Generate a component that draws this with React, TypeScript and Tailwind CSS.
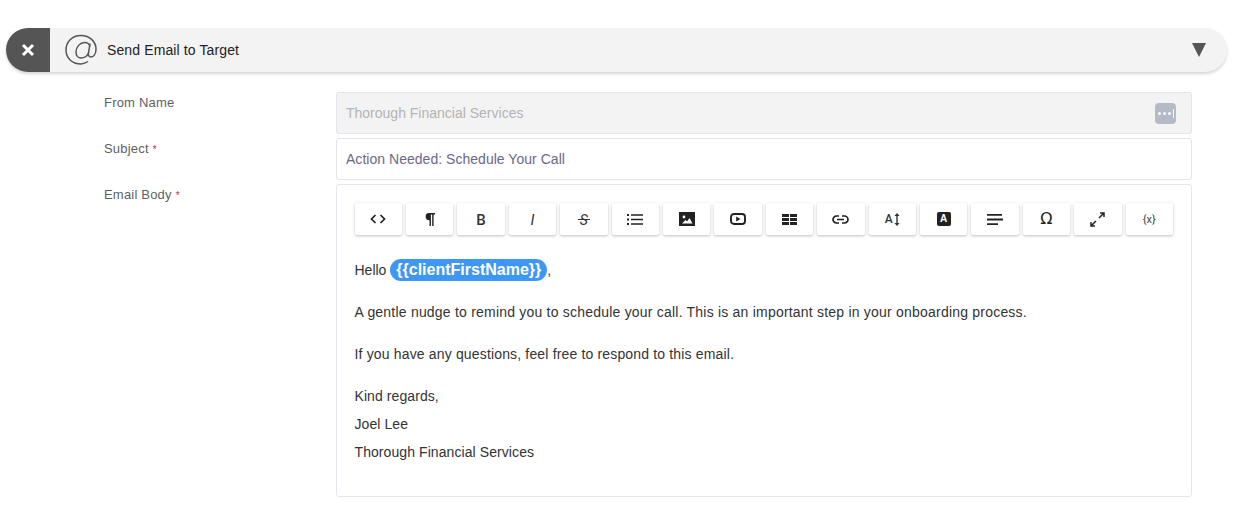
import React from "react";

const stroke = "currentColor";
const tb: React.ReactNode[] = [
  <svg key="a" width="16" height="10" viewBox="0 0 16 10" fill="none" stroke={stroke} strokeWidth="1.7"><path d="M5.5 1 1.5 5l4 4M10.5 1l4 4-4 4" /></svg>,
  <svg key="b" width="10" height="13" viewBox="0 0 10 13" fill={stroke}><path d="M4 0h6v1.6H8.6V13H7.2V1.6H5.9V13H4.5V7.2A3.6 3.6 0 0 1 4 0Z" /></svg>,
  <span key="c" className="mt-[2px] text-[15px] font-medium leading-none text-[#333] [font-family:Roboto,sans-serif]">B</span>,
  <span key="d" className="mt-[2px] text-[15px] italic leading-none text-[#333] [font-family:Roboto,sans-serif]">I</span>,
  <span key="e" className="relative mt-[2px] text-[14px] italic leading-none text-[#333] [font-family:Roboto,sans-serif] after:absolute after:left-[-2px] after:right-[-2px] after:top-[6px] after:h-px after:bg-[#333]">S</span>,
  <svg key="f" width="16" height="11" viewBox="0 0 16 11" fill={stroke}><path d="M0 0h2v2H0zM0 4.500h2v2H0zM0 9h2v2H0zM4 .2h12v1.600H4zM4 4.700h12v1.600H4zM4 9.200h12v1.600H4z" /></svg>,
  <svg key="g" width="16" height="14" viewBox="0 0 16 14"><path d="M0 0h16v14H0z" fill="#222" /><circle cx="5" cy="5" r="1.4" fill="#fff" /><path d="M3 11.500 6.500 8l1.500 1.500L10.500 6l3 5.500z" fill="#fff" /></svg>,
  <svg key="h" width="16" height="12" viewBox="0 0 16 12"><rect x="1" y="1" width="14" height="10" rx="3" fill="none" stroke="#222" strokeWidth="1.9" /><path d="M6.200 3.400v5.200L10.500 6z" fill="#222" /></svg>,
  <svg key="i" width="15" height="11" viewBox="0 0 15 11" fill="#222"><path d="M0 0h7v3H0zM8 0h7v3H8zM0 4h7v3H0zM8 4h7v3H8zM0 8h7v3H0zM8 8h7v3H8z" /></svg>,
  <svg key="j" width="17" height="9" viewBox="0 0 17 9" fill="none" stroke="#222" strokeWidth="1.7"><path d="M7 1H4.500a3.500 3.500 0 0 0 0 7H7M10 1h2.500a3.500 3.500 0 0 1 0 7H10M5 4.500h7" /></svg>,
  <span key="k" className="flex items-center gap-[1px]"><span className="text-[12px] font-medium leading-none text-[#333] [font-family:Roboto,sans-serif]">A</span><svg width="6" height="13" viewBox="0 0 6 13" fill="#333"><path d="M3 0l2.600 3H3.700v7h1.900L3 13 .4 10h1.900V3H.4z" /></svg></span>,
  <span key="l" className="flex h-[14px] w-[14px] items-center justify-center rounded-[2px] bg-[#222] text-[10px] font-bold leading-none text-white [font-family:'Liberation_Sans',sans-serif]">A</span>,
  <svg key="m" width="16" height="11" viewBox="0 0 16 11" fill="#222"><path d="M0 0h15v1.800H0zM0 4.600h16v1.800H0zM0 9.200h11v1.800H0z" /></svg>,
  <span key="n" className="text-[16px] leading-none text-[#222] [font-family:'DejaVu_Sans',sans-serif]">Ω</span>,
  <svg key="o" width="15" height="15" viewBox="0 0 15 15" fill="none" stroke="#222" strokeWidth="1.5"><path d="M9 6l5-5M10 1h4v4M6 9l-5 5M1 10v4h4" /></svg>,
  <span key="p" className="text-[11px] leading-none text-[#444] [font-family:Roboto,sans-serif]">{"{x}"}</span>,
];

function Label({ children, req }: { children: React.ReactNode; req?: boolean }) {
  return (
    <div className="w-[336px] shrink-0 pl-[104px] pt-[3px] text-[13px] leading-[16px] tracking-[0.2px] text-[#5f5f5f]">
      {children}
      {req && <span className="ml-[4px] text-[10px] text-[#b33]">*</span>}
    </div>
  );
}

export default function App() {
  return (
    <div className="h-[530px] w-[1234px] overflow-hidden bg-white pt-[28px] text-[14px] text-[#333] [font-family:'Liberation_Sans',sans-serif]">
      <div className="ml-[6px] flex h-[44px] w-[1221px] items-center rounded-[22px] bg-[#f3f3f3] shadow-[0_2px_3px_rgba(0,0,0,0.16)]">
        <div className="flex h-full w-[44px] items-center justify-center rounded-l-[22px] bg-[#555]">
          <svg width="14" height="14" viewBox="0 0 14 14" stroke="#fff" strokeWidth="3"><path d="M2 2l10 10M12 2L2 12" /></svg>
        </div>
        <svg className="ml-[15px]" width="32" height="32" viewBox="0 0 32 32" fill="none" stroke="#555" strokeWidth="1.5">
          <path d="M23 27.500A15 15 0 0 1 16 30C7 30 1 24 1 16S7 1.500 16 1.500 31 8 31 15c0 4.500-2 8-5 8-2 0-3-1.500-2.500-4L25 9.500" />
          <path d="M23.500 19C22 22.500 19 24 16 24c-3 0-5-2.500-5-6 0-5 4-9.500 8.500-9.500 3 0 5 2 5.500 4" />
        </svg>
        <span className="ml-[10px] text-[14px] tracking-[0.12px] text-[#222]">Send Email to Target</span>
        <svg className="ml-auto mr-[21px]" width="14" height="14" viewBox="0 0 14 14" fill="#555"><path d="M0 0h14L7 14z" /></svg>
      </div>

      <div className="mt-[20px] flex flex-col gap-[4px]">
        <div className="flex">
          <Label>From Name</Label>
          <div className="flex h-[42px] w-[856px] items-center justify-between rounded-[3px] border border-[#e4e6ee] bg-[#f3f3f3] pl-[9px] pr-[15px] text-[#b4b4b4]">
            <span>Thorough Financial Services</span>
            <span className="flex h-[21px] w-[21px] items-center justify-center gap-[2px] rounded-[4px] bg-[#b4bac6]">
              <i className="h-[3px] w-[3px] rounded-full bg-white" />
              <i className="h-[3px] w-[3px] rounded-full bg-white" />
              <i className="h-[3px] w-[3px] rounded-full bg-white" />
              <i className="h-[9px] w-px bg-white" />
            </span>
          </div>
        </div>
        <div className="flex">
          <Label req>Subject</Label>
          <div className="flex h-[42px] w-[856px] items-center rounded-[3px] border border-[#e4e6ee] bg-white pl-[9px] tracking-[0.03px] text-[#6d6789]">
            Action Needed: Schedule Your Call
          </div>
        </div>
        <div className="flex">
          <Label req>Email Body</Label>
          <div className="h-[313px] w-[856px] rounded-[3px] border border-[#e4e6ee] bg-white pl-[17.500px] pr-[18px] pt-[18px]">
            <div className="flex gap-[4px]">
              {tb.map((icon, i) => (
                <div key={i} className="flex h-[32px] flex-1 items-center justify-center rounded-[2px] bg-white text-[#222] shadow-[0_1px_3px_rgba(0,0,0,0.25)]">
                  {icon}
                </div>
              ))}
            </div>
            <div className="mt-[24px] leading-[28px]">
              <div className="flex h-[22px] items-center">
                Hello&nbsp;
                <span className="rounded-[11px] bg-[#3f97f5] px-[6px] text-[16px] font-bold leading-[22px] text-white">{"{{clientFirstName}}"}</span>,
              </div>
              <p className="mt-[17px] tracking-[0.21px]">A gentle nudge to remind you to schedule your call. This is an important step in your onboarding process.</p>
              <p className="mt-[14px] tracking-[0.16px]">If you have any questions, feel free to respond to this email.</p>
              <p className="mt-[14px] tracking-[0.08px]">Kind regards,</p>
              <p className="tracking-[0.08px]">Joel Lee</p>
              <p className="tracking-[0.08px]">Thorough Financial Services</p>
            </div>
          </div>
        </div>
      </div>
    </div>
  );
}
